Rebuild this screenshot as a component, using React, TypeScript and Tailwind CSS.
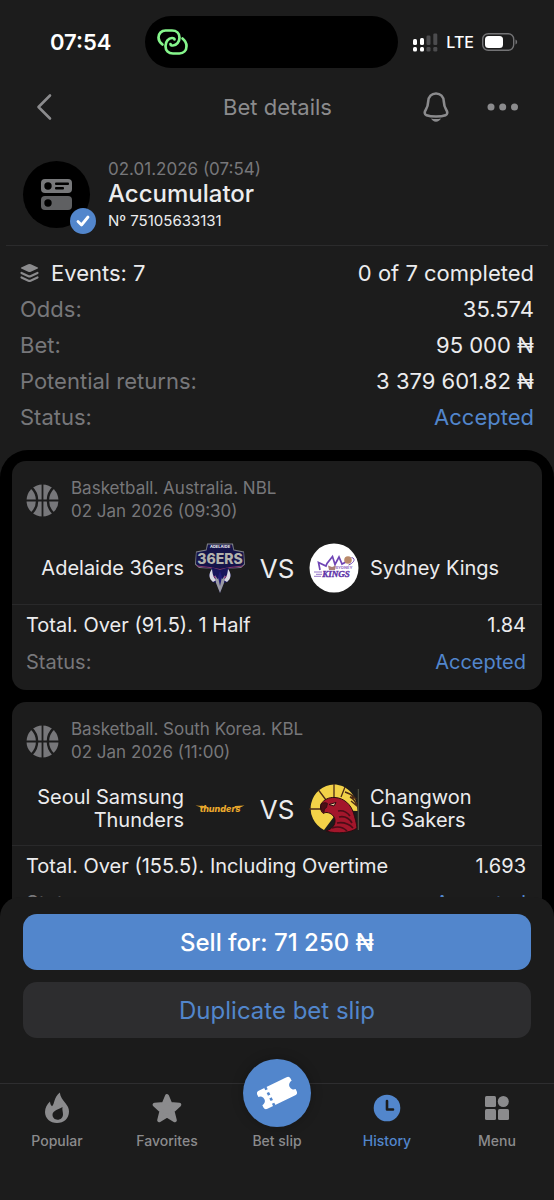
import type { ReactNode } from "react";

type Team = { name: string; logo: ReactNode };

type Match = {
  id: number;
  league: string;
  date: string;
  home: Team;
  away: Team;
  market: string;
  odds: string;
  status: string;
};

const summary = [
  { label: "Odds:", value: "35.574" },
  { label: "Bet:", value: "95 000 ₦" },
  { label: "Potential returns:", value: "3 379 601.82 ₦" },
  { label: "Status:", value: "Accepted", accent: true },
];

const matches: Match[] = [
  {
    id: 1,
    league: "Basketball. Australia. NBL",
    date: "02 Jan 2026 (09:30)",
    home: { name: "Adelaide 36ers", logo: <AdelaideLogo /> },
    away: { name: "Sydney Kings", logo: <KingsLogo /> },
    market: "Total. Over (91.5). 1 Half",
    odds: "1.84",
    status: "Accepted",
  },
  {
    id: 2,
    league: "Basketball. South Korea. KBL",
    date: "02 Jan 2026 (11:00)",
    home: { name: "Seoul Samsung\nThunders", logo: <ThundersLogo /> },
    away: { name: "Changwon\nLG Sakers", logo: <SakersLogo /> },
    market: "Total. Over (155.5). Including Overtime",
    odds: "1.693",
    status: "Accepted",
  },
];

export default function App() {
  return (
    <div className="flex h-screen flex-col overflow-hidden bg-[#1c1c1c] font-['Inter',sans-serif] text-[#ececee]">
      <StatusBar />
      <Header />
      <main className="flex min-h-0 flex-1 flex-col overflow-y-auto [scrollbar-width:none]">
        <BetTitle />
        <Summary />
        <section className="flex flex-1 shrink-0 flex-col gap-3 rounded-t-[28px] bg-black px-3 pt-[11px] pb-8">
          {matches.map((m) => (
            <MatchCard key={m.id} match={m} />
          ))}
        </section>
      </main>
      <div className="relative -mt-6 flex shrink-0 flex-col gap-3 rounded-t-[20px] bg-[#1b1b1b] px-[23px] pt-[17px] pb-[45px]">
        <button className="h-14 rounded-[14px] bg-[#5286cc] pt-px text-2xl font-medium text-white">Sell for: 71 250 ₦</button>
        <button className="h-14 rounded-[14px] bg-[#2d2d2f] pt-px text-2xl text-[#5286cc]">Duplicate bet slip</button>
      </div>
      <TabBar />
    </div>
  );
}

function StatusBar() {
  return (
    <div className="flex h-[84px] shrink-0 items-center pl-[50px] pr-[36px]">
      <span className="w-[95px] text-[22px] font-semibold text-white">07:54</span>
      <div className="flex h-[52px] w-[253px] items-center rounded-full bg-black pl-3">
        <svg width="31" height="26" viewBox="0 0 31 26" fill="none" stroke="#86f68c" strokeWidth="2.700" strokeLinecap="round">
          <path d="M5.500 15.500C3 13.500 1.500 11.500 1.500 8.500c0-4 3-7 7-7h6.500c4.500 0 7.500 3 7.500 7 0 4.500-3 8-6.500 8-1.500 0-2.500-.5-2.500-1.500" />
          <path d="M25.500 9.500c2.500 2 4 4.500 4 7.500 0 4.500-3 7.500-7 7.500H16c-4.500 0-7.500-3-7.500-7.500 0-4.500 3-8 6.500-8 1.500 0 2.500.5 2.500 1.500" />
        </svg>
      </div>
      <div className="flex flex-1 items-center justify-end gap-2">
        <svg width="26" height="19" viewBox="0 0 26 19" fill="#fff">
          <rect x="1" y="6" width="4" height="6" rx="1.500" />
          <rect x="1" y="14" width="4" height="4.500" rx="1.500" />
          <rect x="8" y="5" width="4" height="7" rx="1.500" />
          <rect x="8" y="14" width="4" height="4.500" rx="1.500" />
          <g fill="#4c4c4e">
            <rect x="14.500" y="2.500" width="4" height="9.500" rx="1.200" />
            <rect x="14.500" y="14" width="4" height="4.500" rx="1.200" />
            <rect x="21.300" y="0.500" width="4" height="11.500" rx="1.200" />
            <rect x="21.300" y="14" width="4" height="4.500" rx="1.200" />
          </g>
        </svg>
        <span className="text-base font-medium text-white">LTE</span>
        <svg width="36" height="18" viewBox="0 0 36 18">
          <rect x="0.700" y="0.700" width="31" height="16.600" rx="5.500" fill="none" stroke="#737375" strokeWidth="1.400" />
          <rect x="3" y="3" width="18" height="12" rx="3.500" fill="#fff" />
          <path d="M33.500 6.500c2.200.8 2.200 4.200 0 5z" fill="#737375" />
        </svg>
      </div>
    </div>
  );
}

function Header() {
  return (
    <header className="flex h-[46px] shrink-0 items-center pl-[36px] pr-[35px] text-[#8b8b8d]">
      <div className="flex flex-1">
        <button aria-label="Back">
          <svg width="16" height="28" viewBox="0 0 16 28" fill="none" stroke="currentColor" strokeWidth="2.600" strokeLinecap="round" strokeLinejoin="round">
            <path d="M14 2.500 2.500 14 14 25.500" />
          </svg>
        </button>
      </div>
      <h1 className="text-[22px]">Bet details</h1>
      <div className="flex flex-1 items-center justify-end gap-[38px]">
        <button aria-label="Notifications">
          <svg width="26" height="30" viewBox="0 0 26 30">
            <path
              d="M13 1.500C8.500 1.500 5.500 4.800 5.200 9.500 5 14 4.300 15.500 2.800 17.800 1.300 20 1.200 22.300 3.500 23.200c4.500 1.800 14.500 1.800 19 0 2.300-.9 2.200-3.200.7-5.400-1.500-2.300-2.200-3.800-2.400-8.300C20.500 4.800 17.500 1.500 13 1.500z"
              fill="none"
              stroke="currentColor"
              strokeWidth="2.600"
            />
            <path d="M8 26.500c3.200.7 6.800.7 10 0-1 1.900-2.800 3.300-5 3.300s-4-1.400-5-3.300z" fill="currentColor" />
          </svg>
        </button>
        <button aria-label="More">
          <svg width="32" height="8" viewBox="0 0 32 8" fill="currentColor">
            <circle cx="4" cy="4" r="3.500" />
            <circle cx="15.700" cy="4" r="3.500" />
            <circle cx="27.500" cy="4" r="3.500" />
          </svg>
        </button>
      </div>
    </header>
  );
}

function BetTitle() {
  return (
    <div className="mx-[6px] flex shrink-0 items-center gap-[18px] border-b border-[#2b2b2c] px-[17px] pt-[29px] pb-[12px]">
      <div className="relative mb-[4px] flex h-[67px] w-[67px] items-center justify-center rounded-full bg-black">
        <svg width="31" height="31" viewBox="0 0 31 31">
          <rect width="31" height="14" rx="4" fill="#77787a" />
          <rect y="17" width="31" height="14" rx="4" fill="#5f6062" />
          <g fill="#000">
            <circle cx="7" cy="7" r="3.700" />
            <circle cx="7" cy="24" r="3.700" />
            <rect x="14" y="3.500" width="14" height="2.500" rx="1" />
            <rect x="14" y="8" width="9" height="2.500" rx="1" />
          </g>
        </svg>
        <span className="absolute -right-[6px] -bottom-[6px] flex h-[26px] w-[26px] items-center justify-center rounded-full bg-[#5286cc]">
          <svg width="14" height="12" viewBox="0 0 14 12" fill="none" stroke="#fff" strokeWidth="2.800" strokeLinecap="round" strokeLinejoin="round">
            <path d="M2 6.500 5.500 10 12 2" />
          </svg>
        </span>
      </div>
      <div>
        <p className="text-[17px] leading-5 text-[#77777a]">02.01.2026 (07:54)</p>
        <h2 className="text-2xl leading-[30px] font-medium">Accumulator</h2>
        <p className="text-[15px] leading-6">Nº 75105633131</p>
      </div>
    </div>
  );
}

function Summary() {
  return (
    <dl className="shrink-0 px-[20px] pt-[9px] pb-[15px] text-[22px] leading-[36px]">
      <div className="flex justify-between">
        <dt className="flex items-center gap-3">
          <svg width="19" height="20" viewBox="0 0 19 20" fill="#8b8b8d">
            <path d="M8.200 1.200Q9.500.6 10.800 1.200L17.800 4.500q.8.500 0 1L10.800 8.800q-1.300.6-2.600 0L1.200 5.500q-.8-.5 0-1z" />
            <g fill="none" stroke="#8b8b8d" strokeWidth="2.200" strokeLinecap="round" strokeLinejoin="round">
              <path d="m1.500 10 7 3.200q1 .4 2 0l7-3.200" />
              <path d="m1.500 14.500 7 3.200q1 .4 2 0l7-3.200" />
            </g>
          </svg>
          Events: 7
        </dt>
        <dd>0 of 7 completed</dd>
      </div>
      {summary.map((row) => (
        <div key={row.label} className="flex justify-between">
          <dt className="text-[#77777a]">{row.label}</dt>
          <dd className={row.accent ? "text-[#5286cc]" : ""}>{row.value}</dd>
        </div>
      ))}
    </dl>
  );
}

function MatchCard({ match }: { match: Match }) {
  return (
    <article className="shrink-0 rounded-[14px] bg-[#1c1c1c] text-xl">
      <div className="flex items-center gap-3 px-[14px] pt-[16px] text-[17px] leading-[23px] text-[#77777a]">
        <BasketballIcon />
        <div>
          <p>{match.league}</p>
          <p>{match.date}</p>
        </div>
      </div>
      <div className="flex items-center px-[14px] pt-[20px] pb-[11px] leading-[23px]">
        <div className="flex flex-1 items-center justify-end gap-[11px] text-right">
          <span className="whitespace-pre-line">{match.home.name}</span>
          {match.home.logo}
        </div>
        <span className="w-16 text-center text-[26px]">VS</span>
        <div className="flex flex-1 items-center gap-[11px]">
          {match.away.logo}
          <span className="whitespace-pre-line">{match.away.name}</span>
        </div>
      </div>
      <div className="border-t border-[#29292a] pt-[2px] pr-4 pb-[9px] pl-[14px] leading-[37px]">
        <div className="flex justify-between">
          <span>{match.market}</span>
          <span>{match.odds}</span>
        </div>
        <div className="flex justify-between">
          <span className="text-[#77777a]">Status:</span>
          <span className="text-[#5286cc]">{match.status}</span>
        </div>
      </div>
    </article>
  );
}

function BasketballIcon() {
  return (
    <svg width="33" height="33" viewBox="0 0 33 33" className="shrink-0">
      <circle cx="16.500" cy="16.500" r="16" fill="#77777a" />
      <g fill="none" stroke="#1c1c1c" strokeWidth="1.800">
        <path d="M16.500 0v33M0 16.500h33" />
        <path d="M5.500 3.500c7.500 7 7.500 19 0 26M27.500 3.500c-7.500 7-7.500 19 0 26" strokeWidth="2.400" />
      </g>
    </svg>
  );
}

function AdelaideLogo() {
  return (
    <svg width="50" height="50" viewBox="0 0 50 50" className="shrink-0">
      <path d="M12 .5h26l1 6 10 2 1 13-4 3.500-10 .5L25 28 14 25.500 4 25 0 21.500 1 8.500l10-2z" fill="#7f8088" />
      <path d="M13 1.500h24l1.500 6 10 2 .5 11.500-3.500 3L25 27 4.500 24 1 21l.5-11.500 10-2z" fill="#15144a" />
      <path d="M2 23 15 24.500l10 2 10-2L48 23" fill="none" stroke="#8b3a6d" strokeWidth="1" />
      <text x="25" y="5" fontSize="4" fontWeight="800" fill="#e4e4ea" textAnchor="middle">
        ADELAIDE
      </text>
      <text x="25" y="21" fontSize="14" fontWeight="800" fill="#b2b2ac" textAnchor="middle">
        36ERS
      </text>
      <path d="M17 24.500 25 27l8-2.500 3 8-3.500 6.500-3.500 1L25 50l-4-10-3.500-1L14 32.500z" fill="#17155c" />
      <path d="M17 26c-3.500 4.500-3.500 9.500 1 13l3.500-2c-3-2-4-6-4.500-11zM33 26c3.500 4.500 3.500 9.500-1 13l-3.500-2c3-2 4-6 4.500-11z" fill="#d9d9e2" />
      <path d="m20 32 2.500 4 2.500-2 2.500 2 2.500-4-1 8-4 10-4-10z" fill="#9a9aa3" />
      <path d="m23 34 2-6 2 6-2 9z" fill="#211d78" />
      <path d="m18.500 33 2.500 2M31.500 33 29 35" stroke="#c0468a" strokeWidth="1" />
    </svg>
  );
}

function KingsLogo() {
  return (
    <svg width="50" height="50" viewBox="0 0 50 50" className="shrink-0">
      <circle cx="25" cy="25" r="24.500" fill="#fff" />
      <path d="M11 27 9.500 19.500l7.500 3.500 1-2.500 5.500-7 2.500 8 4-7.500 3 7 4-2" fill="none" stroke="#6f45b5" strokeWidth="1.700" />
      <circle cx="39" cy="17" r="3.800" fill="#b98a6b" />
      <path d="M42.500 14.500c4 .5 3.500 5-3 7.500" fill="none" stroke="#6f45b5" strokeWidth="1" />
      <path d="m19 22.500 4 1.500 4-1.500-1 4.500h-6z" fill="#a98078" />
      <text x="35" y="25.500" fontSize="4" fontWeight="800" fill="#9a7cc8" textAnchor="middle">
        SYDNEY
      </text>
      <text x="27" y="33.500" fontSize="9" fontWeight="900" fontStyle="italic" fill="#5f33a8" stroke="#5f33a8" strokeWidth=".4" textAnchor="middle" fontFamily="Liberation Serif, serif">
        KINGS
      </text>
      <path d="M5 29h8M7 31.300h6M5 33.300h7" stroke="#8a68c4" strokeWidth=".9" />
    </svg>
  );
}

function ThundersLogo() {
  return (
    <svg width="50" height="50" viewBox="0 0 50 50" className="shrink-0">
      <path d="M.5 21.500 12 22.300l-1 1.500-4.500-.3zM49.500 21.500 40 22l-1 1.500 5 .5z" fill="#e6a62b" />
      <text x="25" y="28" fontSize="9" fontWeight="800" fontStyle="italic" fill="#eba92c" textAnchor="middle">
        thunders
      </text>
    </svg>
  );
}

function SakersLogo() {
  return (
    <svg width="50" height="50" viewBox="0 0 50 50" className="shrink-0">
      <path d="M15 46A24 24 0 0 1 25 .5C36 .5 48 9 48.500 27L30 26z" fill="#f2d248" />
      <path d="M25 0v13M9.500 6 17 16M0 25h12M36 3l-4 10" stroke="#4a2a17" strokeWidth="1.300" />
      <path d="M36 8c4 1 7 3 10 6l-5-1c4 2 6 5 7 9l-6-5" fill="none" stroke="#4a2a17" strokeWidth="1.500" />
      <path
        d="M12 20c3-4.500 8-7 14-6.500 9 .5 16 7 18.500 15.500 1.500 5 3 10 3.500 15-5 4.500-20 6.500-31 3 6-2 9.500-6 9-11-.5-4-4-7-8-7.500-1.500-.2-3 .5-3.500 1-2.500-1.500-3.800-5.500-2.500-9.500z"
        fill="#a3162b"
        stroke="#2a0c10"
        strokeWidth="1"
      />
      <path d="M12 20.500c2-2 4.500-2.500 6.500-1l-1 4c-1.500.5-2.500 2.500-2.500 5-2.500-1.500-4-4.500-3-8z" fill="#4a1016" stroke="#2a0c10" strokeWidth=".8" />
      <path d="m20 20.500 7-2-2 3.500z" fill="#f0d0a0" stroke="#2a0c10" strokeWidth="1" />
      <path d="M29 27c5-1 9 1 12 5M30 33c5-1 10 1 13 6M28 39c6-1 11 0 16 5M23 44c6-2 11-1 15 3" fill="none" stroke="#4a0d17" strokeWidth="1.700" />
      <path d="M49.300 5v41" stroke="#6f735c" strokeWidth=".7" />
    </svg>
  );
}

function TabBar() {
  return (
    <nav className="relative grid h-[117px] shrink-0 grid-cols-5 border-t border-[#2e2e30] px-[2px] text-sm font-medium text-[#8b8b8d]">
      <Tab label="Popular">
        <svg width="26" height="32" viewBox="0 0 26 32" fill="currentColor">
          <path
            fillRule="evenodd"
            d="M15.800.5c.4 4.500 3 7.500 5.700 10.800 2 2.500 3.500 5 3.500 8.200C25 26.500 19.800 31 13 31S1 26.500 1 20c0-4.500 2-7.500 5-10.500.2 2 .6 3.500 2 4.800C10.800 12 9.500 5.500 15.800.5zM18.500 15c-3 2.500-10 3-10 7.800 0 3 2.200 4.900 5 4.900 3.200 0 5.500-2.200 5.500-5.500 0-2.500-1-4-.5-7.200z"
          />
        </svg>
      </Tab>
      <Tab label="Favorites">
        <svg width="30" height="30" viewBox="0 0 30 30" fill="currentColor" stroke="currentColor" strokeWidth="4" strokeLinejoin="round">
          <path d="m15 3 3.300 8 9 .7-6.800 6.300 2.300 9.200L15 22.500l-7.800 4.700L9.500 18l-6.800-6.300 9-.7z" />
        </svg>
      </Tab>
      <Tab label="Bet slip">
        <span className="-mt-[31px] flex h-[68px] w-[68px] shrink-0 items-center justify-center rounded-full bg-[#5286cc] shadow-[0_0_12px_rgba(0,0,0,0.25)]">
          <svg width="40" height="36" viewBox="0 0 40 36">
            <g transform="rotate(-26 20 18)">
              <path d="M4.500 8h31a3 3 0 0 1 3 3v2.500a4.500 4.500 0 0 0 0 9V25a3 3 0 0 1-3 3h-31a3 3 0 0 1-3-3v-2.500a4.500 4.500 0 0 0 0-9V11a3 3 0 0 1 3-3z" fill="#fff" />
              <path d="M12 7.500v21" stroke="#5286cc" strokeWidth="2.600" strokeDasharray="3 3" />
            </g>
          </svg>
        </span>
      </Tab>
      <Tab label="History" active>
        <svg width="28" height="28" viewBox="0 0 28 28">
          <circle cx="14" cy="14" r="13.300" fill="currentColor" />
          <path d="M14 7v8.500h6" fill="none" stroke="#1c1c1c" strokeWidth="2.600" strokeLinecap="round" strokeLinejoin="round" />
        </svg>
      </Tab>
      <Tab label="Menu">
        <svg width="24" height="24" viewBox="0 0 24 24" fill="currentColor">
          <rect width="11" height="11" rx="1.500" />
          <circle cx="18.300" cy="5.500" r="5.500" />
          <rect y="13" width="11" height="11" rx="1.500" />
          <rect x="13" y="13" width="11" height="11" rx="1.500" />
        </svg>
      </Tab>
    </nav>
  );
}

function Tab({ children, label, active }: { children: ReactNode; label: string; active?: boolean }) {
  return (
    <button className={`flex flex-col items-center pt-px ${active ? "text-[#5286cc]" : ""}`}>
      <span className="flex h-[46px] items-center justify-center">{children}</span>
      <span className="leading-5">{label}</span>
    </button>
  );
}
